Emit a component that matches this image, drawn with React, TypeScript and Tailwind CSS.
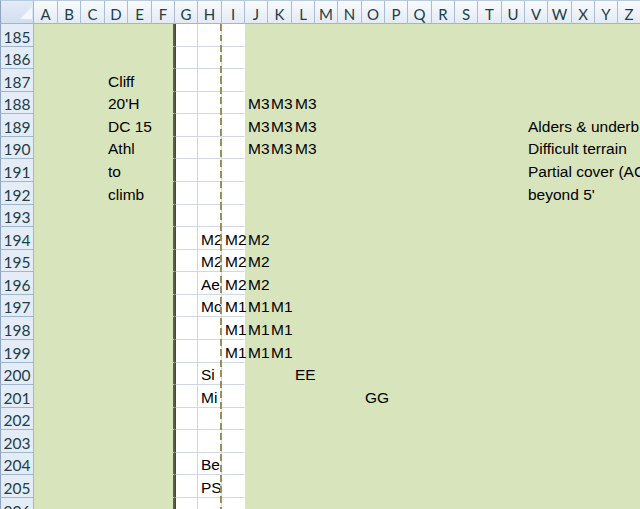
import React from "react";

const COLS = "ABCDEFGHIJKLMNOPQRSTUVWXYZ".split("");
const ROWS = Array.from({ length: 22 }, (_, i) => 185 + i);
const WHITE = new Set(["G", "H", "I"]);
const CLIP = new Set(["G", "H"]);

const DATA: Record<string, string> = {
  "187D": "Cliff",
  "188D": "20'H",
  "189D": "DC 15",
  "190D": "Athl",
  "191D": "to",
  "192D": "climb",
  "188J": "M3",
  "188K": "M3",
  "188L": "M3",
  "189J": "M3",
  "189K": "M3",
  "189L": "M3",
  "190J": "M3",
  "190K": "M3",
  "190L": "M3",
  "189V": "Alders & underb",
  "190V": "Difficult terrain",
  "191V": "Partial cover (AC",
  "192V": "beyond 5'",
  "194H": "M2",
  "194I": "M2",
  "194J": "M2",
  "195H": "M2",
  "195I": "M2",
  "195J": "M2",
  "196H": "Ae",
  "196I": "M2",
  "196J": "M2",
  "197H": "Mc",
  "197I": "M1",
  "197J": "M1",
  "197K": "M1",
  "198I": "M1",
  "198J": "M1",
  "198K": "M1",
  "199I": "M1",
  "199J": "M1",
  "199K": "M1",
  "200H": "Si",
  "200L": "EE",
  "201H": "Mi",
  "201O": "GG",
  "204H": "Be",
  "205H": "PS",
};

function Cell({ row, col }: { row: number; col: string }) {
  const text = DATA[`${row}${col}`];
  const white = WHITE.has(col);
  let cls =
    "flex items-end border-b border-r pl-[3px] pb-0 whitespace-nowrap text-[15.5px] leading-[18px] text-black ";
  if (white) cls += "bg-white border-b-[#d0d7e5] border-r-[#d0d7e5] ";
  else cls += "bg-[#d8e4bc] border-transparent ";
  if (col === "F") cls += "border-r-2 border-r-[#5e5d48] ";
  if (col === "G") cls += "border-l border-l-[#45453a] ";
  if (col === "I") cls += "border-r-white ";
  if (CLIP.has(col)) cls += "overflow-hidden ";
  return (
    <div className={cls}>
      {text ? <span className="relative z-10">{text}</span> : null}
    </div>
  );
}

export default function App() {
  return (
    <div className="relative w-[640px] h-[509px] overflow-hidden bg-white font-[family-name:'Liberation_Sans',Arial,sans-serif]">
      <div className="grid grid-cols-[34px_24px_23px_24px_23px_24px_23px_23px_24px_23px_23px_24px_23px_23px_24px_23px_23px_24px_23px_23px_24px_23px_23px_24px_23px_23px_23px] grid-rows-[24px_23px_22px_23px_22px_23px_22px_23px_23px_22px_23px_22px_23px_22px_23px_23px_22px_23px_22px_23px_22px_23px_23px]">
        <div className="relative border-t border-l border-r border-b border-t-[#b9cbe0] border-l-[#8ea3bd] border-r-[#9eb6ce] border-b-[#9eb6ce] bg-gradient-to-b from-[#e3ebf6] to-[#d3dff0]">
          <svg width="33" height="23" className="absolute left-0 top-0">
            <polygon points="31,6 31,18 19,18" fill="#f4f7fb" />
          </svg>
        </div>
        {COLS.map((c) => (
          <div
            key={c}
            className="flex items-end justify-center border-t border-r border-b border-t-[#b9cbe0] border-r-[#a9bdd5] border-b-[#9eb6ce] bg-gradient-to-b from-[#f9fbfd] to-[#e3eaf5] text-[15px] leading-[18px] text-[#213e47] font-[family-name:Lato,'Open_Sans',sans-serif]"
          >
            {c}
          </div>
        ))}
        {ROWS.map((r) => (
          <React.Fragment key={r}>
            <div className="flex items-end justify-center border-l border-r border-b border-l-[#8ea3bd] border-r-[#9eb6ce] border-b-[#9eb6ce] bg-[#e4ecf7] text-[15.5px] leading-[18px] text-[#213e47] font-[family-name:Lato,'Open_Sans',sans-serif]">
              {r}
            </div>
            {COLS.map((c) => (
              <Cell key={c} row={r} col={c} />
            ))}
          </React.Fragment>
        ))}
      </div>
      <div className="absolute left-[220px] top-[24px] bottom-0 w-[2px] z-20 bg-[repeating-linear-gradient(to_bottom,#9a8e5c_0px,#9a8e5c_7px,transparent_7px,transparent_10.5px)]" />
    </div>
  );
}
